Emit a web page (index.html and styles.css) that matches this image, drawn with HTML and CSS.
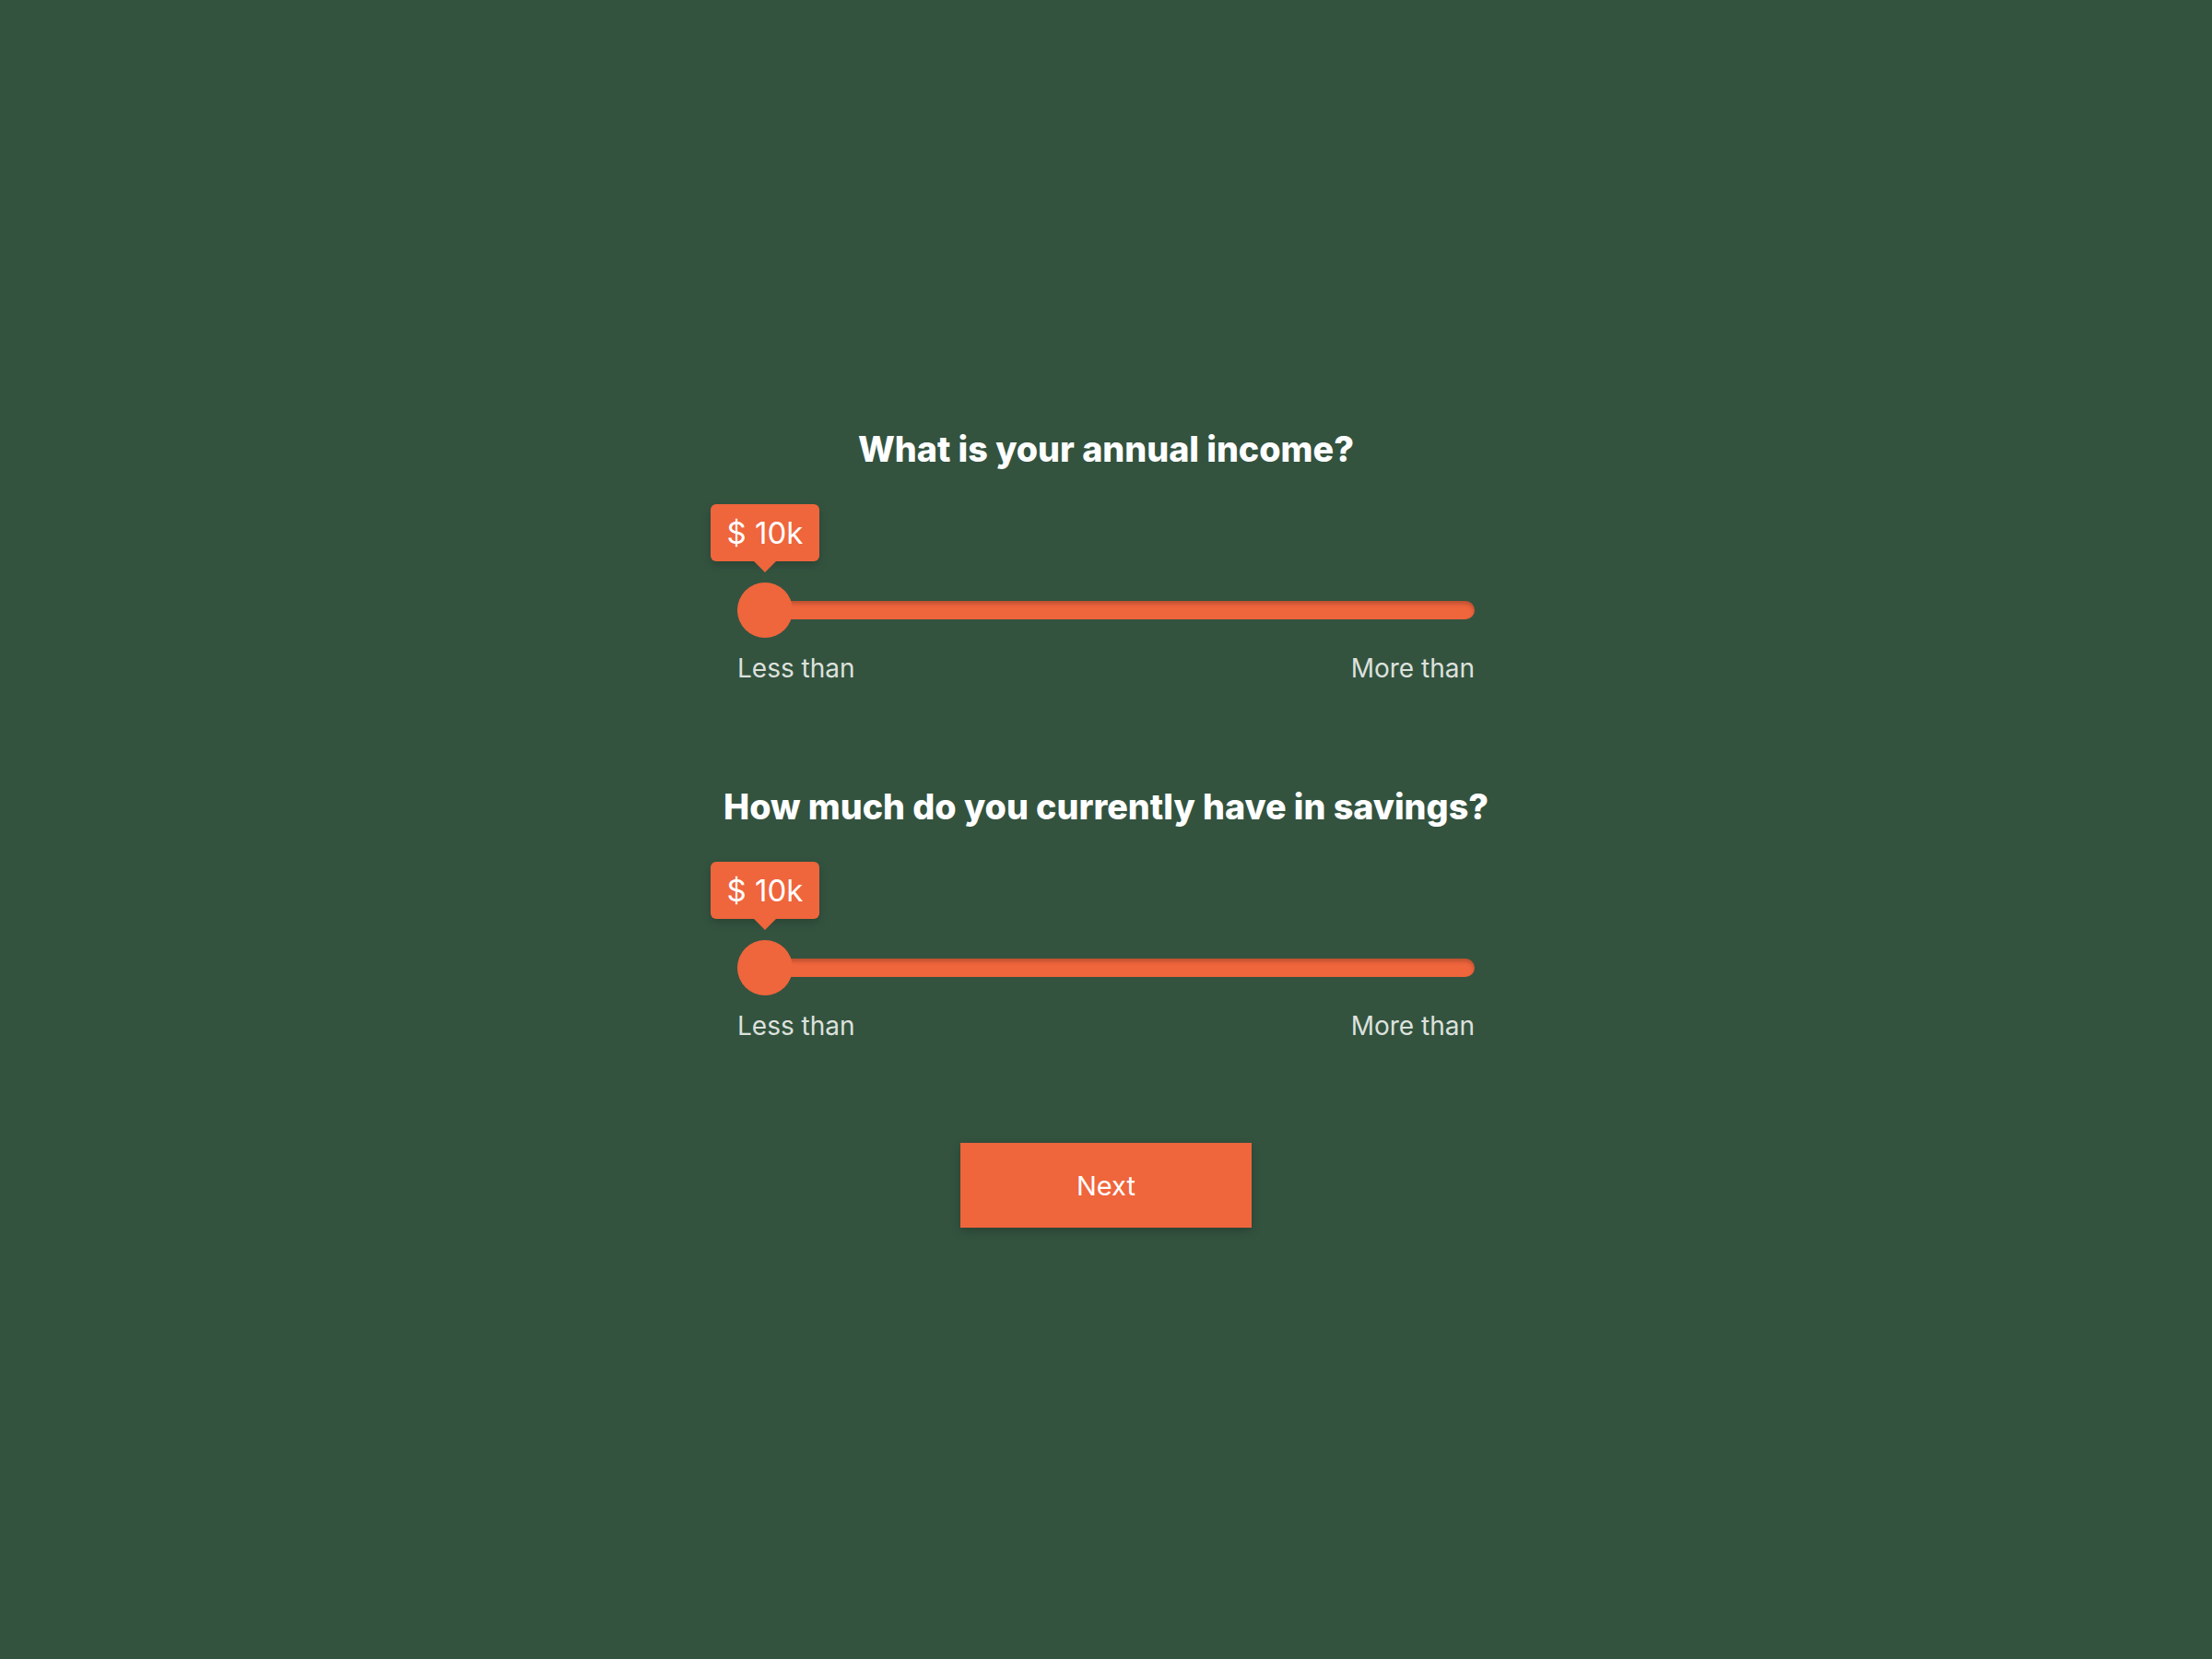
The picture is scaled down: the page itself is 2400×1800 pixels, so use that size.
FILE: index.html
```html
<!DOCTYPE html>
<html lang="en">

<head>
    <meta charset="UTF-8">
    <meta name="viewport" content="width=device-width, initial-scale=1.0">
    <title>Financial Questions</title>
    <link rel="stylesheet" href="styles.css">
</head>

<body>
    <div class="container">
        <div class="field">
            <h2>What is your annual income?</h2>
            <div class="slider" role="slider" aria-valuenow="10">
                <div class="track"></div>
                <div class="thumb"></div>
                <div class="bubble">$ 10k</div>
            </div>
            <div class="labels">
                <span>Less than</span>
                <span>More than</span>
            </div>
        </div>

        <div class="field">
            <h2>How much do you currently have in savings?</h2>
            <div class="slider" role="slider" aria-valuenow="10">
                <div class="track"></div>
                <div class="thumb"></div>
                <div class="bubble">$ 10k</div>
            </div>
            <div class="labels">
                <span>Less than</span>
                <span>More than</span>
            </div>
        </div>

        <button type="button" class="next-btn">Next</button>
    </div>
</body>

</html>
```

FILE: styles.css
```css
/* General Styles */
body {
    font-family: Inter, "Noto Sans", sans-serif;
    margin: 0;
    padding: 0;
    background-color: #33533f;
    color: #ffffff;
}

.container {
    min-height: 100vh;
    display: flex;
    flex-direction: column;
    align-items: center;
    justify-content: center;
    box-sizing: border-box;
    padding-bottom: 6px;
}

/* Question */
.field {
    width: 800px;
    margin-bottom: 108px;
}

.field:last-of-type {
    margin-bottom: 110px;
}

h2 {
    margin: 3px -80px 0;
    font-size: 37.7px;
    line-height: 44px;
    font-weight: 800;
    text-align: center;
    white-space: nowrap;
}

/* Slider */
.slider {
    position: relative;
    height: 60px;
    margin-top: 123px;
    display: flex;
    align-items: center;
}

.track {
    width: 100%;
    height: 20px;
    border-radius: 10px;
    background: #ef653c;
    box-shadow: inset 0 3px 4px rgba(0, 0, 0, 0.22);
}

.thumb {
    position: absolute;
    left: 0;
    top: 0;
    width: 60px;
    height: 60px;
    border-radius: 50%;
    background: #ef653c;
}

.bubble {
    position: absolute;
    left: -29px;
    top: -85px;
    width: 118px;
    height: 62px;
    border-radius: 6px;
    background: #ef653c;
    box-shadow: 0 4px 10px rgba(0, 0, 0, 0.18);
    font-size: 33px;
    line-height: 62px;
    text-align: center;
}

.bubble::after {
    content: "";
    position: absolute;
    left: 47px;
    bottom: -12px;
    border-left: 12px solid transparent;
    border-right: 12px solid transparent;
    border-top: 12px solid #ef653c;
}

.labels {
    display: flex;
    justify-content: space-between;
    margin-top: 17px;
    font-size: 28px;
    line-height: 33px;
    color: #dde1dd;
}

/* Button */
.next-btn {
    width: 316px;
    height: 92px;
    border: none;
    border-radius: 0;
    background-color: #ef653c;
    color: #ffffff;
    font-family: Inter, "Noto Sans", sans-serif;
    font-size: 29px;
    box-shadow: 0 4px 10px rgba(0, 0, 0, 0.2);
    cursor: pointer;
}
```
